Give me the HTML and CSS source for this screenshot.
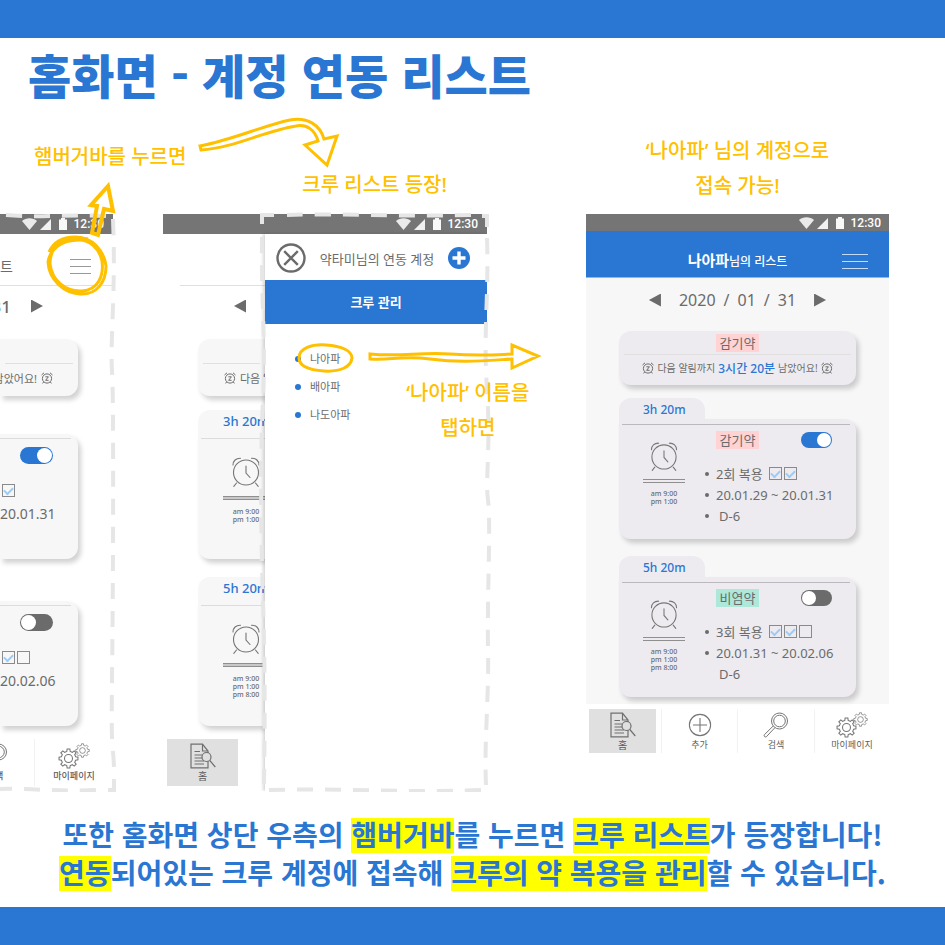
FILE: index.html
```html
<!DOCTYPE html>
<html lang="ko">
<head>
<meta charset="utf-8">
<meta name="viewport" content="width=device-width, initial-scale=1">
<title>홈화면 - 계정 연동 리스트</title>
<link rel="stylesheet" href="styles.css">
</head>
<body>
<svg class="sprite" aria-hidden="true">
  <symbol id="status" viewBox="0 0 46 14">
    <path fill="#fff" opacity=".85" d="M0 4C4 .4 11 .4 15 4L7.500 13Z"/>
    <path fill="#fff" opacity=".9" d="M18 13L29 2V13Z"/>
    <path fill="#fff" opacity=".95" d="M37 2.500H39V1H43V2.500H45V13H37Z"/>
  </symbol>
  <symbol id="alarm" viewBox="0 0 28 30">
    <g fill="none" stroke="#757575" stroke-width="1.100" stroke-linecap="round">
      <circle cx="14" cy="15.500" r="12.500"/>
      <path d="M14 9V16L18 20.500M4.500 26L1.800 29.300M23.500 26L26.200 29.300M1 8C1 4 4 1 8.500 1.200M27 8C27 4 24 1 19.500 1.200"/>
    </g>
  </symbol>
  <symbol id="snooze" viewBox="0 0 12 12">
    <g fill="none" stroke="#6b6b6b" stroke-width="1">
      <circle cx="6" cy="6.500" r="4.600"/>
      <path d="M4.400 4.800H7.400L4.600 8.300H7.600M.5 3L3 .8M11.500 3L9 .8M2.600 10L1.600 11.400M9.400 10L10.400 11.400"/>
    </g>
  </symbol>
  <symbol id="doc" viewBox="0 0 26 25">
    <g fill="none" stroke="#6f6f6f" stroke-width="1.200">
      <path d="M18 17.500V24.300H1V.7H12.500L18 7.500V9.500M12.500 .7V7.500H18M4.500 8H10M4.500 11.500H12M4.500 14.500H12M4.500 17.500H14M4.500 20.500H14"/>
      <circle cx="16.500" cy="13.500" r="4.500"/>
      <path d="M19.800 17L25.300 23.500"/>
    </g>
  </symbol>
  <symbol id="plus" viewBox="0 0 24 24">
    <g fill="none" stroke="#757575" stroke-width="1">
      <circle cx="12" cy="12" r="9.800"/><path d="M12 5.500V18.500M5.500 12H18.500"/>
    </g>
  </symbol>
  <symbol id="search" viewBox="0 0 26 26">
    <g fill="none" stroke="#757575" stroke-width="1">
      <circle cx="16.500" cy="9" r="8"/><circle cx="16.500" cy="9" r="5.800"/>
      <path d="M10.200 14L1.300 22.800C.5 24 2 25.600 3.300 24.800L11.800 15.800"/>
    </g>
  </symbol>
  <symbol id="gear" viewBox="0 0 20 20">
    <path d="M16.800 8.400L19 8.700V11.300L16.800 11.600L15.900 13.700L17.300 15.400L15.400 17.300L13.700 15.900L11.600 16.800L11.300 19H8.700L8.400 16.800L6.300 15.900L4.600 17.300L2.700 15.400L4.100 13.700L3.200 11.600L1 11.300V8.700L3.200 8.400L4.100 6.300L2.700 4.600L4.600 2.700L6.300 4.100L8.400 3.200L8.700 1H11.300L11.600 3.200L13.700 4.100L15.400 2.700L17.300 4.600L15.900 6.300Z"/>
    <circle cx="10" cy="10" r="3.800"/>
  </symbol>
  <symbol id="gears" viewBox="0 0 32 26">
    <g fill="none" stroke="#757575" stroke-width="1">
      <use href="#gear" x="0" y="5" width="21" height="21"/>
      <use href="#gear" x="17" y="0" width="15" height="15"/>
    </g>
  </symbol>
</svg>

<div class="band"></div>
<main>
  <h1>홈화면 - 계정 연동 리스트</h1>

  <section class="stage">
    <p class="note note-menu">햄버거바를 누르면</p>
    <p class="note note-list">크루 리스트 등장!</p>
    <p class="note note-done">‘나아파’ 님의 계정으로<br>접속 가능!</p>

    <div class="phone phone-menu">
      <div class="status"><svg class="status-icons"><use href="#status"/></svg><span>12:30</span></div>
      <header class="head"><span class="head-title">트</span><button class="burger" aria-label="메뉴"><i></i><i></i><i></i></button></header>
      <div class="date"><span>31</span><button class="next" aria-label="다음 날"></button></div>
      <section class="notice"><div class="notice-top"></div><p class="notice-text">남았어요! <svg class="snooze"><use href="#snooze"/></svg></p></section>
      <article class="dose">
        <div class="dose-card"><div class="dose-info">
          <div class="dose-head"><input type="checkbox" class="toggle" aria-label="알림" checked></div>
          <ul><li><input type="checkbox" class="tick" aria-label="복용" checked></li><li>20.01.31</li><li></li></ul>
        </div></div>
      </article>
      <article class="dose">
        <div class="dose-card"><div class="dose-info">
          <div class="dose-head"><input type="checkbox" class="toggle" aria-label="알림"></div>
          <ul><li><input type="checkbox" class="tick" aria-label="복용" checked><input type="checkbox" class="tick" aria-label="복용"></li><li>20.02.06</li><li></li></ul>
        </div></div>
      </article>
      <nav class="tabs">
        <a href="#"><svg class="icon"><use href="#search"/></svg>검색</a>
        <a href="#"><svg class="icon icon-wide"><use href="#gears"/></svg>마이페이지</a>
      </nav>
    </div>

    <div class="phone phone-panel">
      <div class="status"><svg class="status-icons"><use href="#status"/></svg><span>12:30</span></div>
      <div class="split">
        <div class="under">
          <header class="head"></header>
          <div class="date"><button class="prev" aria-label="이전 날"></button></div>
          <section class="notice"><div class="notice-top"></div><p class="notice-text"><svg class="snooze"><use href="#snooze"/></svg> 다음 알</p></section>
          <article class="dose">
            <h3 class="dose-tab">3h 20m</h3>
            <div class="dose-card"><div class="dose-alarm"><svg class="alarm"><use href="#alarm"/></svg><hr><p>am 9:00<br>pm 1:00</p></div></div>
          </article>
          <article class="dose">
            <h3 class="dose-tab">5h 20m</h3>
            <div class="dose-card"><div class="dose-alarm"><svg class="alarm"><use href="#alarm"/></svg><hr><p>am 9:00<br>pm 1:00<br>pm 8:00</p></div></div>
          </article>
          <nav class="tabs"><a href="#" class="current"><svg class="icon"><use href="#doc"/></svg>홈</a></nav>
        </div>
        <aside class="panel">
          <div class="panel-head">
            <button class="round" aria-label="닫기"><svg viewBox="0 0 30 30" width="30" height="30"><g fill="none" stroke="#6b6b6b" stroke-width="2.400"><circle cx="15" cy="15" r="13.500"/><path d="M8.200 8.200L21.800 21.800M21.800 8.200L8.200 21.800"/></g></svg></button>
            <h2>약타미님의 연동 계정</h2>
            <button class="round" aria-label="추가"><svg viewBox="0 0 22 22" width="22" height="22"><circle cx="11" cy="11" r="11" fill="#2976d3"/><path d="M11 4.500V17.500M4.500 11H17.500" stroke="#fff" stroke-width="3.400"/></svg></button>
          </div>
          <h2 class="panel-title">크루 관리</h2>
          <ul class="crew"><li><a href="#">나아파</a></li><li><a href="#">배아파</a></li><li><a href="#">나도아파</a></li></ul>
        </aside>
      </div>
    </div>

    <div class="phone phone-crew">
      <div class="status"><svg class="status-icons"><use href="#status"/></svg><span>12:30</span></div>
      <header class="head"><h2 class="head-title"><b>나아파</b>님의 리스트</h2><button class="burger" aria-label="메뉴"><i></i><i></i><i></i></button></header>
      <div class="screen">
        <div class="date"><button class="prev" aria-label="이전 날"></button><time datetime="2020-01-31"><span>2020</span><span>/</span><span>01</span><span>/</span><span>31</span></time><button class="next" aria-label="다음 날"></button></div>
        <section class="notice">
          <div class="notice-top"><span class="pill">감기약</span></div>
          <p class="notice-text"><svg class="snooze"><use href="#snooze"/></svg> 다음 알림까지 <strong>3시간 20분</strong> 남았어요! <svg class="snooze"><use href="#snooze"/></svg></p>
        </section>
        <article class="dose">
          <h3 class="dose-tab">3h 20m</h3>
          <div class="dose-card">
            <div class="dose-alarm"><svg class="alarm"><use href="#alarm"/></svg><hr><p>am 9:00<br>pm 1:00</p></div>
            <div class="dose-info">
              <div class="dose-head"><span class="pill">감기약</span><input type="checkbox" class="toggle" aria-label="감기약 알림" checked></div>
              <ul><li class="dot"><span>2회 복용</span><span class="ticks"><input type="checkbox" class="tick" aria-label="1회" checked><input type="checkbox" class="tick" aria-label="2회" checked></span></li><li class="dot">20.01.29 ~ 20.01.31</li><li class="dot days">D-6</li></ul>
            </div>
          </div>
        </article>
        <article class="dose">
          <h3 class="dose-tab">5h 20m</h3>
          <div class="dose-card">
            <div class="dose-alarm"><svg class="alarm"><use href="#alarm"/></svg><hr><p>am 9:00<br>pm 1:00<br>pm 8:00</p></div>
            <div class="dose-info">
              <div class="dose-head"><span class="pill pill-mint">비염약</span><input type="checkbox" class="toggle" aria-label="비염약 알림"></div>
              <ul><li class="dot"><span>3회 복용</span><span class="ticks"><input type="checkbox" class="tick" aria-label="1회" checked><input type="checkbox" class="tick" aria-label="2회" checked><input type="checkbox" class="tick" aria-label="3회"></span></li><li class="dot">20.01.31 ~ 20.02.06</li><li class="days">D-6</li></ul>
            </div>
          </div>
        </article>
      </div>
      <nav class="tabs">
        <a href="#" class="current"><svg class="icon"><use href="#doc"/></svg>홈</a>
        <a href="#"><svg class="icon"><use href="#plus"/></svg>추가</a>
        <a href="#"><svg class="icon"><use href="#search"/></svg>검색</a>
        <a href="#"><svg class="icon icon-wide"><use href="#gears"/></svg>마이페이지</a>
      </nav>
    </div>

    <svg class="marks" viewBox="0 110 945 682" preserveAspectRatio="none" aria-hidden="true">
      <g fill="none" stroke="#e6e6e6" stroke-width="4" stroke-dasharray="16 12">
        <path d="M6 215C40 218 70 214 106 216"/>
        <path d="M113 219C116 290 110 340 112 370S113 600 112 680S113 740 114 767"/>
        <path d="M-4 789C30 788 60 792 97 790"/>
        <path stroke-dasharray="none" d="M108 790H114V779"/>
        <path stroke-dasharray="none" d="M262 224V215H274M482 216H487V227"/>
        <path d="M287 215C340 213 400 217 472 215"/>
        <path d="M262 237C261 300 266 340 263 400S261 540 263 600S265 720 264 784"/>
        <path d="M487 238C489 300 483 330 487 390S485 480 488 500S487 600 488 650S484 740 486 785"/>
        <path d="M269 790C340 788 400 793 481 790"/>
      </g>
      <g fill="none" stroke="#ffc000" stroke-width="3">
        <path stroke-width="4" d="M108 186L91 205L97 206L92 233L98 235L104 209L113 211Z"/>
        <path d="M200 146C232 140 262 126 290 120C308 117 320 125 324 139L337 136L327 165L305 145L318 141C315 130 307 124 296 126C264 131 234 148 201 150Z"/>
        <path d="M370 354C400 357 420 352 450 354S490 355 512 354V345L538 356L512 368V359C480 361 460 363 430 359S390 361 370 359Z"/>
        <path d="M299 358C299 348 312 344 326 345C342 346 352 351 352 358C351 367 340 372 324 371C310 370 299 366 299 358Z"/>
        <path d="M88 239C66 234 50 244 50 264C52 281 66 292 82 291C98 290 104 276 102 261C99 247 89 240 79 240C60 240 50 250 48 262C49 280 64 293 80 294C97 295 106 282 106 266C104 250 92 237 75 237C64 237 54 241 49 252"/>
      </g>
    </svg>
    <p class="note note-tap">‘나아파’ 이름을<br>탭하면</p>
  </section>

  <p class="caption">또한 홈화면 상단 우측의 <mark>햄버거바</mark>를 누르면 <mark>크루 리스트</mark>가 등장합니다!<br><mark>연동</mark>되어있는 크루 계정에 접속해 <mark>크루의 약 복용을 관리</mark>할 수 있습니다.</p>
</main>
<div class="band band-end"></div>
</body>
</html>
```

FILE: styles.css
```css
* { box-sizing: border-box; }

body {
  margin: 0;
  min-height: 100vh;
  display: flex;
  flex-direction: column;
  background: #fff;
  color: #6b6b6b;
  font-family: "Noto Sans", "Noto Sans CJK KR", sans-serif;
}

h1, h2, h3, p, ul { margin: 0; padding: 0; font-weight: 400; }
ul { list-style: none; }
a { color: inherit; text-decoration: none; }
button { padding: 0; border: 0; background: none; }
input { appearance: none; margin: 0; flex: none; }
.sprite { position: absolute; width: 0; height: 0; }

.band { height: 38px; background: #2976d3; }
.band-end { margin-top: auto; }

h1 {
  padding-left: 28px;
  line-height: 72px;
  font-family: "Noto Sans CJK KR", sans-serif;
  font-size: 47px;
  font-weight: 900;
  color: #2976d3;
  white-space: nowrap;
}

.stage {
  position: relative;
  display: grid;
  grid-template-columns: 113fr 50fr 324fr 99fr 303fr 56fr;
  grid-template-rows: 104px auto;
  padding-bottom: 6px;
  overflow: hidden;
}

/* Annotations */
.note {
  font-size: 20px;
  line-height: 35px;
  font-weight: 500;
  color: #ffc000;
  white-space: nowrap;
  align-self: end;
}
.note-menu { grid-area: 1 / 1 / 2 / 4; padding: 0 0 40px 34px; }
.note-list { grid-area: 1 / 3; padding: 0 0 12px 43%; }
.note-done { grid-area: 1 / 5; padding-bottom: 11px; text-align: center; }
.note-tap { position: absolute; left: 43%; top: 265px; text-align: center; }
.marks { position: absolute; inset: 0; width: 100%; height: 100%; pointer-events: none; }

/* Phone frame */
.phone { grid-row: 2; min-width: 0; overflow: hidden; font-size: 14px; }
.phone-menu { grid-column: 1; }
.phone-panel { grid-column: 3; display: flex; flex-direction: column; margin-bottom: -5px; }
.phone-crew { grid-column: 5; font-size: 13px; }

.status {
  height: 20px;
  flex: none;
  display: flex;
  align-items: center;
  justify-content: flex-end;
  gap: 6px;
  padding-right: 9px;
  background: #757575;
  color: #fff;
  font: 500 12px/16px Roboto, sans-serif;
}
.phone-crew .status { height: 17px; padding-right: 8px; }
.status-icons { width: 46px; height: 14px; }

.head {
  height: 52px;
  display: flex;
  align-items: center;
  justify-content: flex-end;
  padding: 14px 22px 0 0;
  border-bottom: 1px solid #e0e0e0;
  white-space: nowrap;
}
.phone-menu .head { gap: 57px; }
.phone-menu .head-title { font-size: 14px; }
.phone-panel .head { margin-left: 17px; }
.phone-crew .head {
  height: 47px;
  display: grid;
  grid-template-columns: 26px 1fr 26px;
  padding: 14px 21px 0;
  background: #2976d3;
  border-color: #8db7e8;
  color: #fff;
}
.head-title { font-size: 12px; line-height: 20px; }
.phone-crew .head-title { grid-column: 2; font-weight: 500; text-align: center; }
.head-title b { font-size: 15px; font-weight: 700; }
.burger { width: 27px; display: grid; gap: 6px; }
.burger i { height: 1px; background: #999; }
.phone-crew .burger { width: 26px; }
.phone-crew .burger i { background: #c3dbf6; }

.screen { padding-bottom: 7px; background: #f7f7f7; }

.date { height: 40px; display: flex; align-items: center; gap: 20px; font-size: 17px; }
.phone-menu .date { justify-content: flex-end; padding-right: 70px; font-weight: 500; }
.phone-panel .date { padding-left: 71px; }
.phone-crew .date { height: 44px; justify-content: center; gap: 18px; font-size: 16px; }
.date time { display: flex; gap: 8px; }
.prev, .next { flex: none; width: 12px; height: 13px; background: #6b6b6b; }
.prev { clip-path: polygon(0 50%, 100% 0, 100% 100%); }
.next { clip-path: polygon(0 0, 100% 50%, 0 100%); }

/* Cards */
.notice {
  height: 57px;
  margin: 13px 35px 14px 0;
  padding: 0 5px;
  border-radius: 0 12px 12px 0;
  background: #f7f7f7;
  box-shadow: 3px 4px 5px rgba(0, 0, 0, .18);
}
.notice-top {
  height: 25px;
  display: flex;
  align-items: end;
  justify-content: center;
  border-bottom: 1px solid #e0e0e0;
}
.notice-text {
  height: 28px;
  display: flex;
  align-items: center;
  gap: 4px;
  font-size: 11px;
  white-space: nowrap;
}
.notice-text strong { font-size: 12px; font-weight: 500; color: #2976d3; }
.snooze { flex: none; width: 12px; height: 12px; }
.phone-menu .notice-text { justify-content: flex-end; padding-right: 20px; }
.phone-panel .notice { margin: 13px 0 14px 35px; border-radius: 12px 0 0 12px; }
.phone-panel .notice-text { padding-left: 21px; }
.phone-crew .notice {
  height: 54px;
  margin: 9px 33px 13px;
  border-radius: 12px;
  background: #edebf0;
}
.phone-crew .notice-top { height: 24px; padding-bottom: 2px; }
.phone-crew .notice-text { height: 25px; justify-content: center; gap: 3px; font-size: 10px; }

.dose { margin: 0 35px 18px 0; }
.phone-menu .dose { padding-top: 24px; }
.phone-panel .dose { margin: 0 0 18px 35px; }
.phone-crew .dose { margin: 0 33px 17px; }
.phone-crew .dose:last-child { margin-bottom: 0; }

.dose-tab {
  width: 86px;
  height: 24px;
  padding-left: 25px;
  border-radius: 12px 12px 0 0;
  background: #f7f7f7;
  color: #2976d3;
  font-size: 13px;
  line-height: 23px;
  font-weight: 500;
  white-space: nowrap;
}
.phone-crew .dose-tab {
  height: 21px;
  padding-left: 24px;
  background: #edebf0;
  font-size: 12px;
  line-height: 23px;
}
.dose-card {
  min-height: 125px;
  display: grid;
  grid-template-columns: 1fr;
  padding: 4px 7px 0 0;
  border-radius: 0 12px 12px 0;
  background: #f7f7f7;
  box-shadow: 3px 4px 5px rgba(0, 0, 0, .18);
}
.phone-panel .dose-card { padding: 4px 0 0 3px; border-radius: 0 0 0 12px; }
.phone-crew .dose-card {
  min-height: 120px;
  grid-template-columns: 83px 1fr;
  padding: 5px 6px 0 3px;
  border-radius: 0 12px 12px 12px;
  background: #edebf0;
}
.dose-alarm, .dose-info { border-top: 1px solid #dcdcdc; }
.phone-crew .dose-alarm, .phone-crew .dose-info { border-color: #bbb9be; }
.dose-alarm { padding: 18px 0 0 22px; }
.dose-alarm p { width: 46px; font-size: 7px; line-height: 8px; font-weight: 500; text-align: center; }
.alarm { display: block; width: 28px; height: 30px; margin-left: 9px; }
.dose-alarm hr {
  width: 42px;
  height: 4px;
  margin: 9px 0 8px;
  border: solid #8f8f8f;
  border-width: 1px 0;
  background: #c8c8c8;
}
.phone-crew .dose-alarm { padding: 17px 0 0 21px; }
.phone-crew .dose-alarm p { width: 42px; }
.phone-crew .alarm { margin-left: 7px; height: 29px; }
.phone-crew hr { margin: 8px 0 7px; background: none; }

.dose-head {
  height: 18px;
  margin: 7px 0 15px;
  display: flex;
  align-items: center;
  justify-content: space-between;
}
.phone-menu .dose-head { justify-content: flex-end; padding-right: 18px; }
.phone-crew .dose-head { margin: 6px 0 14px; padding: 0 18px 0 11px; }

.pill {
  width: 43px;
  height: 18px;
  background: #ffd3d4;
  font-size: 13px;
  line-height: 18px;
  text-align: center;
}
.pill-mint { background: #ade8da; }

.toggle { width: 33px; height: 17px; padding: 1px; border-radius: 9px; background: #6b6b6b; display: flex; }
.toggle::before { content: ""; width: 15px; height: 15px; border-radius: 50%; background: #fff; }
.toggle:checked { background: #2976d3; justify-content: flex-end; }
.phone-crew .toggle { width: 31px; height: 16px; }
.phone-crew .toggle::before { width: 14px; height: 14px; }

.dose-info li { height: 23px; display: flex; align-items: center; white-space: nowrap; }
.phone-menu .tick { margin-left: 2px; }
.phone-crew .dose-info li { height: 21px; padding-left: 11px; }
.dot::before {
  content: "";
  width: 4px;
  height: 4px;
  margin: 0 7px 0 -11px;
  border-radius: 50%;
  background: #6b6b6b;
}
.phone-crew .dose-info .days { padding-left: 14px; }
.days::before { margin: 0 10px 0 -14px; }
.ticks { display: flex; gap: 2px; margin-left: 6px; }
.tick { width: 13px; height: 13px; border: 1px solid #8a8a8a; display: grid; place-items: center; }
.tick:checked::before {
  content: "";
  width: 7px;
  height: 4px;
  margin-bottom: 2px;
  border: solid #9ccbf5;
  border-width: 0 0 2px 2px;
  transform: rotate(-45deg);
}

/* Bottom navigation */
.tabs { height: 47px; margin-top: -5px; display: flex; color: #5c5c5c; font-size: 9px; line-height: 12px; }
.tabs a {
  flex: none;
  width: 79px;
  display: flex;
  flex-direction: column;
  align-items: center;
  padding-top: 4px;
  border-left: 1px solid #f2f2f2;
}
.phone-menu .tabs { justify-content: flex-end; font-weight: 500; }
.icon { width: 26px; height: 26px; margin-bottom: 1px; }
.icon-wide { width: 32px; }
.tabs .current { width: 71px; margin: 0 5px 0 4px; background: #e0e0e0; border: 0; font-size: 10px; }
.phone-crew .tabs {
  height: 44px;
  margin-top: 5px;
  display: grid;
  grid-template-columns: 75fr 76fr 77fr 75fr;
}
.phone-crew .tabs a { width: auto; padding-top: 3px; }
.phone-crew .tabs .current { margin-left: 3px; }

/* Crew panel */
.split { flex: 1; display: grid; grid-template-columns: 102fr 222fr; }
.under { min-width: 0; overflow: hidden; }
.panel { position: relative; background: #fff; box-shadow: -2px 0 3px rgba(0, 0, 0, .16); }
.panel-head {
  height: 46px;
  display: flex;
  align-items: center;
  justify-content: space-between;
  padding: 2px 17px 0 11px;
}
.panel-head h2 { font-size: 13px; white-space: nowrap; }
.round { display: flex; }
.panel-title {
  background: #2976d3;
  color: #fff;
  font-size: 13px;
  line-height: 44px;
  font-weight: 700;
  text-align: center;
}
.crew { padding: 21px 0 0 30px; font-size: 11px; line-height: 28px; }
.crew li { display: flex; align-items: center; gap: 9px; }
.crew li::before { content: ""; width: 6px; height: 6px; border-radius: 50%; background: #2976d3; }

.caption {
  margin: 23px 0 16px;
  font-family: "Noto Sans CJK KR", sans-serif;
  font-size: 28px;
  line-height: 38px;
  font-weight: 700;
  color: #2976d3;
  text-align: center;
}
mark { display: inline-block; padding-bottom: 3px; background: #ff0; color: inherit; line-height: 32px; }
```
